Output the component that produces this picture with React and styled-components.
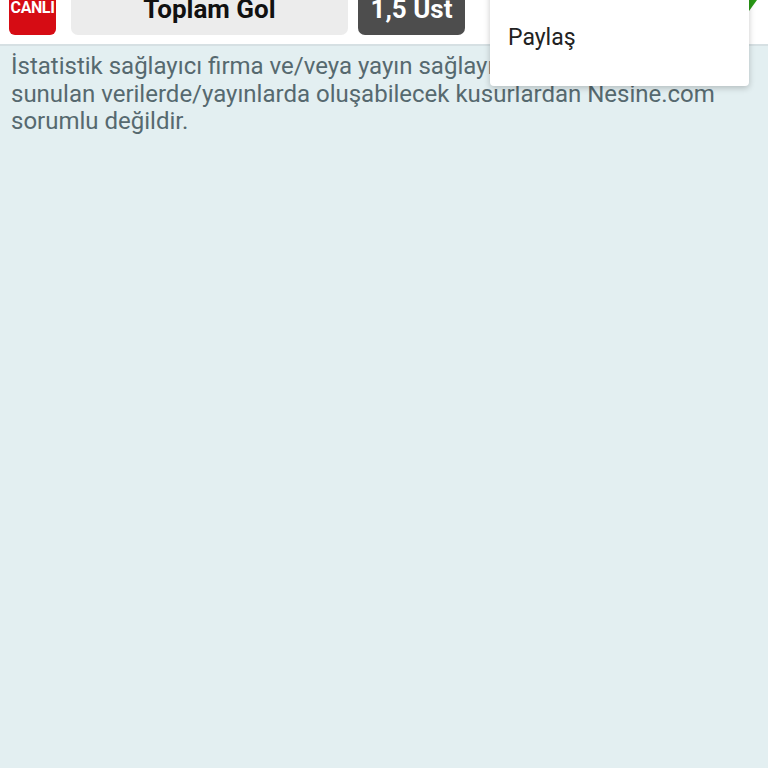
import styled, { createGlobalStyle } from "styled-components";

const GlobalStyle = createGlobalStyle`
  html, body {
    margin: 0;
    padding: 0;
    background: #e3eff1;
    font-family: Roboto, "Noto Sans", "Liberation Sans", sans-serif;
  }
`;

const Page = styled.div`
  position: relative;
  min-height: 768px;
  background: #e3eff1;
  overflow: hidden;
`;

const Header = styled.div`
  height: 46px;
  background: #fff;
  border-bottom: 2px solid #d6e0e3;
  display: flex;
  align-items: flex-end;
  gap: 10px;
  padding: 0 9px 9px;
  box-sizing: border-box;
`;

const LiveBadge = styled.div`
  flex: none;
  width: 47px;
  height: 60px;
  background: #d60c14;
  border-radius: 6px;
  color: #fff;
  font-weight: 700;
  font-size: 16px;
  line-height: 16px;
  letter-spacing: -0.4px;
  display: flex;
  align-items: flex-end;
  justify-content: center;
  padding-bottom: 19px;
  box-sizing: border-box;
  margin-right: 5px;
`;

const Pill = styled.div`
  flex: none;
  height: 60px;
  width: ${(p) => p.$w}px;
  background: ${(p) => (p.$dark ? "#4d4d4d" : "#ececec")};
  color: ${(p) => (p.$dark ? "#fff" : "#111")};
  border-radius: 7px;
  font-weight: 700;
  font-size: 26px;
  line-height: 26px;
  display: flex;
  align-items: flex-end;
  justify-content: center;
  padding-bottom: 13px;
  box-sizing: border-box;
`;

const Corner = styled.svg`
  position: absolute;
  top: 0;
  right: 0;
`;

const Menu = styled.div`
  position: absolute;
  top: -20px;
  right: 19px;
  width: 259px;
  height: 106px;
  background: #fff;
  border-radius: 4px;
  box-shadow: 0 2px 6px rgba(0, 0, 0, 0.22);
  display: flex;
  flex-direction: column;
  justify-content: flex-end;
  padding: 0 18px 35px;
  box-sizing: border-box;
`;

const MenuItem = styled.div`
  font-size: 23px;
  color: #222;
`;

const Notice = styled.p`
  margin: 0;
  padding: 7px 11px 0;
  font-size: 24px;
  line-height: 27.5px;
  color: #56696f;
`;

export default function App() {
  return (
    <>
      <GlobalStyle />
      <Page>
        <Header>
          <LiveBadge>CANLI</LiveBadge>
          <Pill $w={277}>Toplam Gol</Pill>
          <Pill $w={107} $dark>
            1,5 Üst
          </Pill>
        </Header>
        <Notice>
          İstatistik sağlayıcı firma ve/veya yayın sağlayıcı kuruluştan alınarak
          sunulan verilerde/yayınlarda oluşabilecek kusurlardan Nesine.com
          sorumlu değildir.
        </Notice>
        <Corner width="40" height="40" viewBox="0 0 40 40">
          <polygon points="0,0 29,0 0,40" fill="#2a9a17" />
        </Corner>
        <Menu>
          <MenuItem>Paylaş</MenuItem>
        </Menu>
      </Page>
    </>
  );
}
